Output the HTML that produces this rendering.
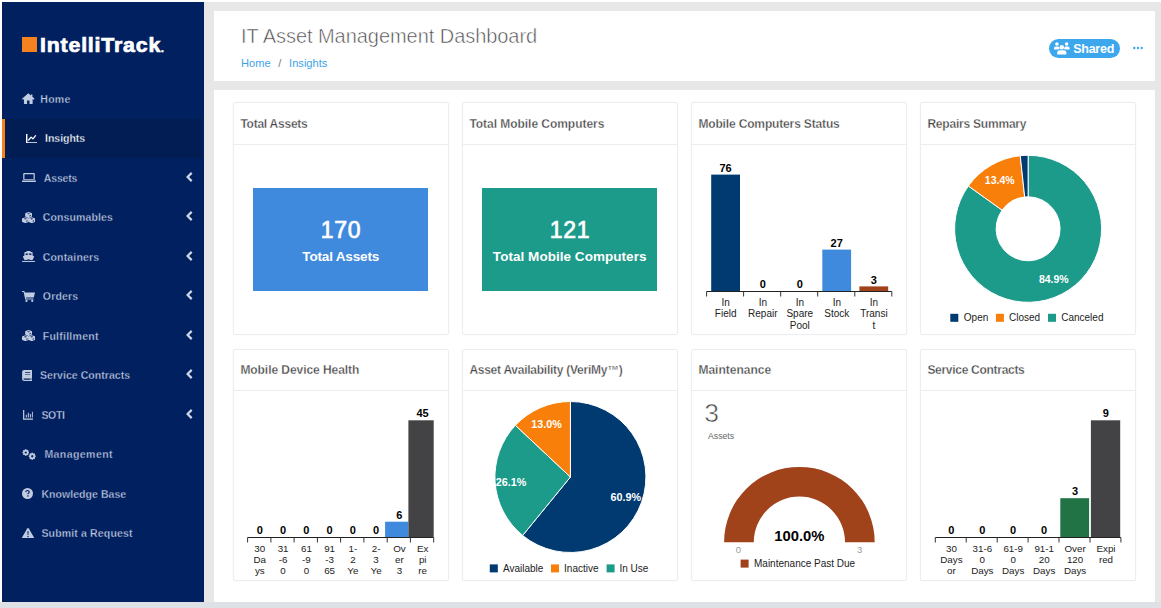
<!DOCTYPE html>
<html lang="en">
<head>
<meta charset="utf-8">
<title>IT Asset Management Dashboard</title>
<style>
*{box-sizing:border-box;margin:0;padding:0}
html,body{width:1161px;height:608px;overflow:hidden;background:#fff;font-family:"Liberation Sans",sans-serif;}
.abs{position:absolute}
#app{position:absolute;left:0;top:0;width:1161px;height:608px;background:#fff;overflow:hidden}
#main{position:absolute;left:2px;top:2px;width:1159px;height:600px;background:#e7e7e7}
#foot{position:absolute;left:0;top:602px;width:1161px;height:6px;background:#dee2e6}
#side{position:absolute;left:2px;top:2px;width:202px;height:600px;background:#00205f}
#logo-sq{position:absolute;left:20.4px;top:35.2px;width:14.8px;height:14.5px;background:#f5821f}
#logo-t{position:absolute;left:38.3px;top:29.5px;font-weight:bold;font-size:19.5px;line-height:26px;color:#fff;letter-spacing:.75px;white-space:nowrap;-webkit-text-stroke:.7px #fff;transform:scaleX(1.092);transform-origin:0 0}
#logo-t i{font-style:normal;font-size:9px;letter-spacing:0}
.mi{position:absolute;left:0;width:202px;height:39px;color:#c2cce1;font-size:10.5px;font-weight:bold;line-height:39px;white-space:nowrap}
.mi.on{background:#021d54;color:#fff;border-left:3px solid #f5821f;width:200px}
.mi svg{position:absolute;left:20px;top:13px;width:13px;height:13px;fill:currentColor}
.mi span{position:absolute;left:38px;top:0;-webkit-text-stroke:.3px #00205f}
.mi.on span{-webkit-text-stroke:.3px #021d54}
.mi b{position:absolute;left:181px;top:14px;width:6px;height:10px}
#hdr{position:absolute;left:214px;top:11px;width:941px;height:70px;background:#fff}
#hdr h1{position:absolute;left:27px;top:12.2px;font-size:20px;line-height:26px;font-weight:normal;color:#4a4a4a;-webkit-text-stroke:.55px #fff;letter-spacing:-.05px;white-space:nowrap}
#crumb{position:absolute;left:27px;top:45.2px;font-size:11.1px;line-height:14px;color:#777;white-space:nowrap}
#crumb span{display:inline-block;margin:0 7.8px 0 7.6px}
#crumb a{color:#3ea3e6;text-decoration:none}
#pill{position:absolute;left:835px;top:27.7px;width:71.2px;height:19.5px;border-radius:10px;background:#3da7ee;color:#fff;font-weight:bold;font-size:12.5px;line-height:19px;letter-spacing:-.25px}
#pill span{position:absolute;left:24.2px;top:1.2px}
#pill svg{position:absolute;left:5px;top:3.4px;width:15.6px;height:12.7px;fill:#fff}
#dots{position:absolute;left:918.8px;top:34.5px;width:10px;height:4px}
#card{position:absolute;left:214px;top:90px;width:941px;height:512px;background:#fff}
.pn{position:absolute;width:216px;height:232px;border:1px solid #ebeef1;border-radius:2px;background:#fff;box-shadow:0 0 2px rgba(0,0,0,.03)}
.pn h2{position:absolute;left:0;top:0;width:214px;height:41px;border-bottom:1px solid #ebeef1;font-size:12px;line-height:41px;padding-left:6.4px;color:#444;font-weight:bold;white-space:nowrap;-webkit-text-stroke:.3px #fff}
.pn svg.ch{position:absolute;left:-1px;top:-1px;width:216px;height:233px}
.box{position:absolute;left:19.2px;top:85px;width:175px;height:103px;color:#fff;text-align:center}
.box .n{position:absolute;left:0;width:100%;top:27.4px;font-size:23px;line-height:30px;-webkit-text-stroke:.7px #fff;letter-spacing:.8px;text-indent:.8px}
.box .l{position:absolute;left:0;width:100%;top:60px;font-size:13.5px;line-height:18px;font-weight:bold;white-space:nowrap}
.big3{position:absolute;left:12.3px;top:48.3px;font-size:26.5px;line-height:30px;color:#444;-webkit-text-stroke:.6px #fff}
.sm{position:absolute;left:16px;top:80.3px;font-size:8.7px;line-height:12px;color:#666}
svg text{font-family:"Liberation Sans",sans-serif}
</style>
</head>
<body>
<div id="app">
<div id="main"></div>
<div id="foot"></div>
<div id="side">
  <div id="logo-sq"></div>
  <div id="logo-t">IntelliTrack<i>.</i></div>
  <div class="mi" style="top:77.5px"><svg viewBox="0 0 26 22" style="left:20.3px;top:13.2px;width:12.6px;height:11.2px"><path d="M13 0 L0 11.3 L1.800 13.400 L4 11.600 V21 Q4 22 5 22 H10.500 V15 H15.500 V22 H21 Q22 22 22 21 V11.600 L24.200 13.400 L26 11.300 L21.500 7.400 V2.500 H18.300 V4.600 Z"/></svg><span style="left:38.3px;letter-spacing:0.28px">Home</span></div>
  <div class="mi on" style="top:117.0px"><svg viewBox="0 0 24 20" style="left:20.6px;top:14.8px;width:11.5px;height:9.6px"><path d="M0 0 H3 V17 H24 V20 H0 Z"/><path d="M5.5 12.5 L10.5 6.5 L14.5 10 L20 3.5" fill="none" stroke="currentColor" stroke-width="2.6" stroke-linecap="round" stroke-linejoin="round"/></svg><span style="left:40.0px;letter-spacing:-0.01px">Insights</span></div>
  <div class="mi" style="top:156.5px"><svg viewBox="0 0 28 19" style="left:20.3px;top:14px;width:14px;height:9.5px"><path d="M4.400 0 H23.600 Q25.600 0 25.600 2 V13.600 H2.400 V2 Q2.400 0 4.400 0 Z M4.900 2.500 V11.800 H23.100 V2.500 Z" fill-rule="evenodd"/><path d="M0 14.800 H28 V16 Q28 19 25 19 H3 Q0 19 0 16 Z"/></svg><span style="left:41.8px;letter-spacing:-0.17px">Assets</span><svg viewBox="0 0 7 10" style="left:183.800px;top:13.400px;width:7px;height:10px;fill:none"><path d="M5.700 0.900 L1.600 5 L5.700 9.100" stroke="#cfd6e4" stroke-width="2.200" fill="none"/></svg></div>
  <div class="mi" style="top:196.0px"><svg viewBox="0 0 132 112" style="left:20.1px;top:13.600px;width:13.200px;height:11.200px"><path transform="translate(32,0) scale(.133,.118)" fill-rule="evenodd" d="M256 3 L480 87 Q512 100 512 130 V355 Q512 385 486 398 L278 502 Q256 512 234 502 L26 398 Q0 385 0 355 V130 Q0 100 32 87 Z M256 96 L380 141 L256 190 L132 141 Z M316 392 V296 L424 252 V340 Z"/><path transform="translate(0,52) scale(.133,.118)" fill-rule="evenodd" d="M256 3 L480 87 Q512 100 512 130 V355 Q512 385 486 398 L278 502 Q256 512 234 502 L26 398 Q0 385 0 355 V130 Q0 100 32 87 Z M256 96 L380 141 L256 190 L132 141 Z M316 392 V296 L424 252 V340 Z"/><path transform="translate(64,52) scale(.133,.118)" fill-rule="evenodd" d="M256 3 L480 87 Q512 100 512 130 V355 Q512 385 486 398 L278 502 Q256 512 234 502 L26 398 Q0 385 0 355 V130 Q0 100 32 87 Z M256 96 L380 141 L256 190 L132 141 Z M316 392 V296 L424 252 V340 Z"/></svg><span style="left:40.8px;letter-spacing:0.12px">Consumables</span><svg viewBox="0 0 7 10" style="left:183.800px;top:13.400px;width:7px;height:10px;fill:none"><path d="M5.700 0.900 L1.600 5 L5.700 9.100" stroke="#cfd6e4" stroke-width="2.200" fill="none"/></svg></div>
  <div class="mi" style="top:235.5px"><svg viewBox="0 0 26 22" style="left:20px;top:13px;width:13px;height:11px"><path d="M9 0 H17 V2.200 H20 Q21.200 2.200 21.200 3.400 V9.200 L23.800 10.300 Q24.500 10.700 24.200 11.500 L21.500 17.500 Q17 18.600 13 16.600 Q9 18.600 4.500 17.500 L1.800 11.500 Q1.500 10.700 2.200 10.300 L4.800 9.200 V3.400 Q4.800 2.200 6 2.200 H9 Z M7.300 5.200 V8.600 L12.200 6.900 V5.200 Z M13.800 5.200 V6.900 L18.700 8.600 V5.200 Z" fill-rule="evenodd"/><path d="M0 19.300 Q3.200 20.600 6.500 19.300 Q9.700 20.800 13 19.300 Q16.300 20.800 19.500 19.300 Q22.800 20.600 26 19.300 V21.600 Q22.800 22.600 19.500 21.500 Q16.300 22.800 13 21.500 Q9.700 22.800 6.500 21.500 Q3.200 22.600 0 21.600 Z"/></svg><span style="left:40.8px;letter-spacing:0.16px">Containers</span><svg viewBox="0 0 7 10" style="left:183.800px;top:13.400px;width:7px;height:10px;fill:none"><path d="M5.700 0.900 L1.600 5 L5.700 9.100" stroke="#cfd6e4" stroke-width="2.200" fill="none"/></svg></div>
  <div class="mi" style="top:275.0px"><svg viewBox="0 0 26 22" style="left:20px;top:14px;width:13px;height:11px"><path d="M0 0 H4.800 L5.500 3 H26 L23.500 13 H8 L8.500 15 H23 V17.200 H6.500 L3.200 2.200 H0 Z"/><circle cx="9" cy="19.800" r="2.200"/><circle cx="20.500" cy="19.800" r="2.200"/></svg><span style="left:40.8px;letter-spacing:0.18px">Orders</span><svg viewBox="0 0 7 10" style="left:183.800px;top:13.400px;width:7px;height:10px;fill:none"><path d="M5.700 0.900 L1.600 5 L5.700 9.100" stroke="#cfd6e4" stroke-width="2.200" fill="none"/></svg></div>
  <div class="mi" style="top:314.5px"><svg viewBox="0 0 132 112" style="left:20.1px;top:13.600px;width:13.200px;height:11.200px"><path transform="translate(32,0) scale(.133,.118)" fill-rule="evenodd" d="M256 3 L480 87 Q512 100 512 130 V355 Q512 385 486 398 L278 502 Q256 512 234 502 L26 398 Q0 385 0 355 V130 Q0 100 32 87 Z M256 96 L380 141 L256 190 L132 141 Z M316 392 V296 L424 252 V340 Z"/><path transform="translate(0,52) scale(.133,.118)" fill-rule="evenodd" d="M256 3 L480 87 Q512 100 512 130 V355 Q512 385 486 398 L278 502 Q256 512 234 502 L26 398 Q0 385 0 355 V130 Q0 100 32 87 Z M256 96 L380 141 L256 190 L132 141 Z M316 392 V296 L424 252 V340 Z"/><path transform="translate(64,52) scale(.133,.118)" fill-rule="evenodd" d="M256 3 L480 87 Q512 100 512 130 V355 Q512 385 486 398 L278 502 Q256 512 234 502 L26 398 Q0 385 0 355 V130 Q0 100 32 87 Z M256 96 L380 141 L256 190 L132 141 Z M316 392 V296 L424 252 V340 Z"/></svg><span style="left:40.8px;letter-spacing:0.25px">Fulfillment</span><svg viewBox="0 0 7 10" style="left:183.800px;top:13.400px;width:7px;height:10px;fill:none"><path d="M5.700 0.900 L1.600 5 L5.700 9.100" stroke="#cfd6e4" stroke-width="2.200" fill="none"/></svg></div>
  <div class="mi" style="top:354.0px"><svg viewBox="0 0 20 22" style="left:20.2px;top:14px;width:10.200px;height:11px"><path d="M4 0 H20 V16.300 H18.900 V19.600 H20 V22 H4 Q0 22 0 18 V4 Q0 0 4 0 Z M6 4.600 V6 H16.200 V4.600 Z M6 8.300 V9.700 H16.200 V8.300 Z M4 17 Q2.700 17 2.700 18.200 Q2.700 19.400 4 19.400 H16.800 V17 Z" fill-rule="evenodd"/></svg><span style="left:38.0px;letter-spacing:0.05px">Service Contracts</span><svg viewBox="0 0 7 10" style="left:183.800px;top:13.400px;width:7px;height:10px;fill:none"><path d="M5.700 0.900 L1.600 5 L5.700 9.100" stroke="#cfd6e4" stroke-width="2.200" fill="none"/></svg></div>
  <div class="mi" style="top:393.5px"><svg viewBox="0 0 22 20" style="left:20.5px;top:14.400px;width:10.900px;height:9.800px"><path d="M0 0 H2.500 V17.500 H22 V20 H0 Z"/><path d="M5.500 9.500 H8 V15.500 H5.500 Z M9.700 5.500 H12.200 V15.500 H9.700 Z M13.900 8 H16.400 V15.500 H13.900 Z M18.100 3.500 H20.600 V15.500 H18.100 Z" opacity=".85"/></svg><span style="left:39.4px;letter-spacing:-0.30px">SOTI</span><svg viewBox="0 0 7 10" style="left:183.800px;top:13.400px;width:7px;height:10px;fill:none"><path d="M5.700 0.900 L1.600 5 L5.700 9.100" stroke="#cfd6e4" stroke-width="2.200" fill="none"/></svg></div>
  <div class="mi" style="top:433.0px"><svg viewBox="0 0 28 22" style="left:20.3px;top:13.8px;width:14px;height:11px"><g transform="translate(7.500,7)"><path d="M-1.500 -6.500 H1.500 L2 -4.600 L3.700 -5.600 L5.600 -3.700 L4.600 -2 L6.500 -1.500 V1.500 L4.600 2 L5.600 3.700 L3.700 5.600 L2 4.600 L1.500 6.500 H-1.500 L-2 4.600 L-3.700 5.600 L-5.600 3.700 L-4.600 2 L-6.500 1.500 V-1.500 L-4.600 -2 L-5.600 -3.700 L-3.700 -5.600 L-2 -4.600 Z M0 -2.200 A2.200 2.200 0 1 0 0.010 -2.200 Z" fill-rule="evenodd"/></g><g transform="translate(20.500,14.500) scale(1.050)"><path d="M-1.500 -6.500 H1.500 L2 -4.600 L3.700 -5.600 L5.600 -3.700 L4.600 -2 L6.500 -1.500 V1.500 L4.600 2 L5.600 3.700 L3.700 5.600 L2 4.600 L1.500 6.500 H-1.500 L-2 4.600 L-3.700 5.600 L-5.600 3.700 L-4.600 2 L-6.500 1.500 V-1.500 L-4.600 -2 L-5.600 -3.700 L-3.700 -5.600 L-2 -4.600 Z M0 -2.200 A2.200 2.200 0 1 0 0.010 -2.200 Z" fill-rule="evenodd"/></g></svg><span style="left:42.4px;letter-spacing:0.44px">Management</span></div>
  <div class="mi" style="top:472.5px"><svg viewBox="0 0 22 22" style="left:20.2px;top:13.300px;width:11px;height:11px"><circle cx="11" cy="11" r="11"/><path d="M7.600 8.200 Q7.800 5 11.200 5 Q14.500 5 14.500 7.800 Q14.500 9.600 12.800 10.500 Q12 11 12 12.300" fill="none" stroke="#00205f" stroke-width="2.300"/><circle cx="11.900" cy="16" r="1.500" fill="#00205f"/></svg><span style="left:39.4px;letter-spacing:0.06px">Knowledge Base</span></div>
  <div class="mi" style="top:511.9px"><svg viewBox="0 0 24 21" style="left:20px;top:14px;width:12px;height:10.500px"><path d="M12 0 Q13 0 13.600 1 L23.700 18.500 Q24.500 21 22 21 H2 Q-0.500 21 0.300 18.500 L10.400 1 Q11 0 12 0 Z"/><path d="M10.800 6.500 H13.200 L12.800 14 H11.200 Z" fill="#00205f"/><circle cx="12" cy="17" r="1.500" fill="#00205f"/></svg><span style="left:39.4px;letter-spacing:0.16px">Submit a Request</span></div>
</div>
<div id="hdr">
  <h1>IT Asset Management Dashboard</h1>
  <div id="crumb"><a>Home</a><span>/</span><a>Insights</a></div>
  <div id="pill"><svg viewBox="0 0 16 13"><circle cx="8" cy="5.300" r="2.300"/><path d="M3.700 12.900 Q3.300 12.900 3.300 12.300 V11 Q3.300 8.400 6 8.400 H10 Q12.700 8.400 12.700 11 V12.300 Q12.700 12.900 12.300 12.900 Z"/><circle cx="3" cy="2.100" r="1.800"/><path d="M0 7.700 V6.500 Q0 4.700 1.800 4.700 H4.200 Q4.900 4.700 5.300 5.100 Q5.200 6.300 5.900 7.200 Q4.800 7.300 4.200 7.700 Z"/><circle cx="13" cy="2.100" r="1.800"/><path d="M16 7.700 V6.500 Q16 4.700 14.200 4.700 H11.800 Q11.100 4.700 10.700 5.100 Q10.800 6.300 10.100 7.200 Q11.200 7.300 11.800 7.700 Z"/></svg><span>Shared</span></div>
  <svg id="dots" viewBox="0 0 10 4"><circle cx="1.3" cy="2" r="1.2" fill="#3da7ee"/><circle cx="5" cy="2" r="1.2" fill="#3da7ee"/><circle cx="8.7" cy="2" r="1.2" fill="#3da7ee"/></svg>
</div>
<div id="card">
  <div class="pn" style="left:19px;top:12px;height:233px"><h2 style="letter-spacing:-0.24px;height:42px;line-height:43px">Total Assets</h2><div class="box" style="background:#3f8adc"><div class="n">170</div><div class="l" style="letter-spacing:-0.17px">Total Assets</div></div></div>
  <div class="pn" style="left:248px;top:12px;height:233px"><h2 style="letter-spacing:-0.04px;height:42px;line-height:43px">Total Mobile Computers</h2><div class="box" style="background:#1c9a8a"><div class="n">121</div><div class="l" style="letter-spacing:0.04px">Total Mobile Computers</div></div></div>
  <div class="pn" style="left:477px;top:12px;height:233px"><h2 style="letter-spacing:-0.15px;height:42px;line-height:43px">Mobile Computers Status</h2><svg class="ch" viewBox="0 0 216 233"><rect x="20.2" y="72.6" width="28.8" height="116.4" fill="#003a70"/>
<rect x="131.3" y="147.6" width="28.8" height="41.4" fill="#3f8adc"/>
<rect x="168.4" y="184.4" width="28.8" height="4.6" fill="#a0421a"/>
<path d="M15.6 189.5 H200.8" stroke="#222" stroke-width="1" fill="none"/>
<path d="M15.6 189.5 v5 M52.6 189.5 v5 M89.7 189.5 v5 M126.7 189.5 v5 M163.8 189.5 v5 M200.8 189.5 v5 " stroke="#333" stroke-width="1" fill="none"/>
<text x="34.6" y="69.7" font-size="11" text-anchor="middle" fill="#000" font-weight="bold">76</text>
<text x="34.7" y="203.8" font-size="10" text-anchor="middle" fill="#222">In</text>
<text x="34.7" y="215.3" font-size="10" text-anchor="middle" fill="#222">Field</text>
<text x="71.7" y="186.1" font-size="11" text-anchor="middle" fill="#000" font-weight="bold">0</text>
<text x="71.8" y="203.8" font-size="10" text-anchor="middle" fill="#222">In</text>
<text x="71.8" y="215.3" font-size="10" text-anchor="middle" fill="#222">Repair</text>
<text x="108.7" y="186.1" font-size="11" text-anchor="middle" fill="#000" font-weight="bold">0</text>
<text x="108.8" y="203.8" font-size="10" text-anchor="middle" fill="#222">In</text>
<text x="108.8" y="215.3" font-size="10" text-anchor="middle" fill="#222">Spare</text>
<text x="108.8" y="226.8" font-size="10" text-anchor="middle" fill="#222">Pool</text>
<text x="145.7" y="144.7" font-size="11" text-anchor="middle" fill="#000" font-weight="bold">27</text>
<text x="145.8" y="203.8" font-size="10" text-anchor="middle" fill="#222">In</text>
<text x="145.8" y="215.3" font-size="10" text-anchor="middle" fill="#222">Stock</text>
<text x="182.8" y="181.5" font-size="11" text-anchor="middle" fill="#000" font-weight="bold">3</text>
<text x="182.9" y="203.8" font-size="10" text-anchor="middle" fill="#222">In</text>
<text x="182.9" y="215.3" font-size="10" text-anchor="middle" fill="#222">Transi</text>
<text x="182.9" y="226.8" font-size="10" text-anchor="middle" fill="#222">t</text></svg></div>
  <div class="pn" style="left:706px;top:12px;height:233px"><h2 style="letter-spacing:-0.21px;height:42px;line-height:43px">Repairs Summary</h2><svg class="ch" viewBox="0 0 216 233"><path d="M108.10 53.30 A73.5 73.5 0 1 1 48.37 83.97 L82.09 108.15 A32 32 0 1 0 108.10 94.80 Z" fill="#1c9a8a" stroke="#fff" stroke-width="1"/>
<path d="M48.37 83.97 A73.5 73.5 0 0 1 100.26 53.72 L104.69 94.98 A32 32 0 0 0 82.09 108.15 Z" fill="#f77f0a" stroke="#fff" stroke-width="1"/>
<path d="M100.26 53.72 A73.5 73.5 0 0 1 108.10 53.30 L108.10 94.80 A32 32 0 0 0 104.69 94.98 Z" fill="#003a70" stroke="#fff" stroke-width="1"/>
<text x="79.7" y="82.0" font-size="10.5" text-anchor="middle" fill="#fff" font-weight="bold">13.4%</text>
<text x="133.8" y="181.0" font-size="10.5" text-anchor="middle" fill="#fff" font-weight="bold">84.9%</text>
<rect x="30.3" y="211.8" width="8" height="8" fill="#003a70"/>
<text x="43.8" y="219.3" font-size="10" text-anchor="start" fill="#222">Open</text>
<rect x="75.9" y="211.8" width="8" height="8" fill="#f77f0a"/>
<text x="89.0" y="219.3" font-size="10" text-anchor="start" fill="#222">Closed</text>
<rect x="128.0" y="211.8" width="8" height="8" fill="#1c9a8a"/>
<text x="141.2" y="219.3" font-size="10" text-anchor="start" fill="#222">Canceled</text></svg></div>
  <div class="pn" style="left:19px;top:259px;height:232px"><h2 style="letter-spacing:-0.06px;height:41px;line-height:40px">Mobile Device Health</h2><svg class="ch" viewBox="0 0 216 233"><rect x="152.1" y="172.7" width="23.3" height="15.3" fill="#3f8adc"/>
<rect x="175.4" y="71.3" width="25.3" height="116.7" fill="#434345"/>
<path d="M14.6 188.5 H200.7" stroke="#222" stroke-width="1" fill="none"/>
<path d="M14.6 188.5 v5 M37.9 188.5 v5 M61.1 188.5 v5 M84.4 188.5 v5 M107.6 188.5 v5 M130.9 188.5 v5 M154.2 188.5 v5 M177.4 188.5 v5 M200.7 188.5 v5 " stroke="#333" stroke-width="1" fill="none"/>
<text x="26.7" y="185.1" font-size="11" text-anchor="middle" fill="#000" font-weight="bold">0</text>
<text x="26.8" y="203.3" font-size="9.8" text-anchor="middle" fill="#222">30</text>
<text x="26.8" y="214.3" font-size="9.8" text-anchor="middle" fill="#222">Da</text>
<text x="26.8" y="225.3" font-size="9.8" text-anchor="middle" fill="#222">ys</text>
<text x="50.0" y="185.1" font-size="11" text-anchor="middle" fill="#000" font-weight="bold">0</text>
<text x="50.1" y="203.3" font-size="9.8" text-anchor="middle" fill="#222">31</text>
<text x="50.1" y="214.3" font-size="9.8" text-anchor="middle" fill="#222">-6</text>
<text x="50.1" y="225.3" font-size="9.8" text-anchor="middle" fill="#222">0</text>
<text x="73.3" y="185.1" font-size="11" text-anchor="middle" fill="#000" font-weight="bold">0</text>
<text x="73.4" y="203.3" font-size="9.8" text-anchor="middle" fill="#222">61</text>
<text x="73.4" y="214.3" font-size="9.8" text-anchor="middle" fill="#222">-9</text>
<text x="73.4" y="225.3" font-size="9.8" text-anchor="middle" fill="#222">0</text>
<text x="96.5" y="185.1" font-size="11" text-anchor="middle" fill="#000" font-weight="bold">0</text>
<text x="96.6" y="203.3" font-size="9.8" text-anchor="middle" fill="#222">91</text>
<text x="96.6" y="214.3" font-size="9.8" text-anchor="middle" fill="#222">-3</text>
<text x="96.6" y="225.3" font-size="9.8" text-anchor="middle" fill="#222">65</text>
<text x="119.8" y="185.1" font-size="11" text-anchor="middle" fill="#000" font-weight="bold">0</text>
<text x="119.9" y="203.3" font-size="9.8" text-anchor="middle" fill="#222">1-</text>
<text x="119.9" y="214.3" font-size="9.8" text-anchor="middle" fill="#222">2</text>
<text x="119.9" y="225.3" font-size="9.8" text-anchor="middle" fill="#222">Ye</text>
<text x="143.0" y="185.1" font-size="11" text-anchor="middle" fill="#000" font-weight="bold">0</text>
<text x="143.1" y="203.3" font-size="9.8" text-anchor="middle" fill="#222">2-</text>
<text x="143.1" y="214.3" font-size="9.8" text-anchor="middle" fill="#222">3</text>
<text x="143.1" y="225.3" font-size="9.8" text-anchor="middle" fill="#222">Ye</text>
<text x="166.3" y="169.8" font-size="11" text-anchor="middle" fill="#000" font-weight="bold">6</text>
<text x="166.4" y="203.3" font-size="9.8" text-anchor="middle" fill="#222">Ov</text>
<text x="166.4" y="214.3" font-size="9.8" text-anchor="middle" fill="#222">er</text>
<text x="166.4" y="225.3" font-size="9.8" text-anchor="middle" fill="#222">3</text>
<text x="189.6" y="68.4" font-size="11" text-anchor="middle" fill="#000" font-weight="bold">45</text>
<text x="189.7" y="203.3" font-size="9.8" text-anchor="middle" fill="#222">Ex</text>
<text x="189.7" y="214.3" font-size="9.8" text-anchor="middle" fill="#222">pi</text>
<text x="189.7" y="225.3" font-size="9.8" text-anchor="middle" fill="#222">re</text></svg></div>
  <div class="pn" style="left:248px;top:259px;height:232px"><h2 style="letter-spacing:-0.26px;height:41px;line-height:40px">Asset Availability (VeriMy™)</h2><svg class="ch" viewBox="0 0 216 233"><path d="M108.40 128.00 L108.40 52.50 A75.5 75.5 0 1 1 60.64 186.47 Z" fill="#003a70" stroke="#fff" stroke-width="1"/>
<path d="M108.40 128.00 L60.64 186.47 A75.5 75.5 0 0 1 53.36 76.32 Z" fill="#1c9a8a" stroke="#fff" stroke-width="1"/>
<path d="M108.40 128.00 L53.36 76.32 A75.5 75.5 0 0 1 108.40 52.50 Z" fill="#f77f0a" stroke="#fff" stroke-width="1"/>
<text x="163.7" y="152.0" font-size="10.8" text-anchor="middle" fill="#fff" font-weight="bold">60.9%</text>
<text x="49.0" y="137.0" font-size="10.8" text-anchor="middle" fill="#fff" font-weight="bold">26.1%</text>
<text x="84.6" y="78.6" font-size="10.8" text-anchor="middle" fill="#fff" font-weight="bold">13.0%</text>
<rect x="27.8" y="215.4" width="8" height="8" fill="#003a70"/>
<text x="40.9" y="222.9" font-size="10" text-anchor="start" fill="#222">Available</text>
<rect x="89.0" y="215.4" width="8" height="8" fill="#f77f0a"/>
<text x="102.1" y="222.9" font-size="10" text-anchor="start" fill="#222">Inactive</text>
<rect x="144.6" y="215.4" width="8" height="8" fill="#1c9a8a"/>
<text x="157.4" y="222.9" font-size="10" text-anchor="start" fill="#222">In Use</text></svg></div>
  <div class="pn" style="left:477px;top:259px;height:232px"><h2 style="letter-spacing:0.00px;height:41px;line-height:40px">Maintenance</h2><svg class="ch" viewBox="0 0 216 233"><path d="M33.1 193.2 A75.3 75.3 0 0 1 183.7 193.2 H154.0 A45.6 45.6 0 0 0 62.8 193.2 Z" fill="#a0421a"/>
<text x="108.4" y="192.0" font-size="14.8" text-anchor="middle" fill="#000" font-weight="bold">100.0%</text>
<text x="47.4" y="204.4" font-size="9.5" text-anchor="middle" fill="#999">0</text>
<text x="168.7" y="204.4" font-size="9.5" text-anchor="middle" fill="#999">3</text>
<rect x="49.6" y="210.6" width="8" height="8" fill="#a0421a"/>
<text x="63.0" y="218.1" font-size="10" text-anchor="start" fill="#222">Maintenance Past Due</text></svg><div class="big3">3</div><div class="sm">Assets</div></div>
  <div class="pn" style="left:706px;top:259px;height:232px"><h2 style="letter-spacing:-0.29px;height:41px;line-height:40px">Service Contracts</h2><svg class="ch" viewBox="0 0 216 233"><rect x="140.3" y="149.2" width="28.8" height="38.8" fill="#217346"/>
<rect x="170.9" y="71.3" width="29.3" height="116.7" fill="#434345"/>
<path d="M15.3 188.5 H200.9" stroke="#222" stroke-width="1" fill="none"/>
<path d="M15.3 188.5 v5 M46.2 188.5 v5 M77.2 188.5 v5 M108.1 188.5 v5 M139.0 188.5 v5 M170.0 188.5 v5 M200.9 188.5 v5 " stroke="#333" stroke-width="1" fill="none"/>
<text x="31.3" y="185.1" font-size="11" text-anchor="middle" fill="#000" font-weight="bold">0</text>
<text x="31.4" y="203.3" font-size="9.8" text-anchor="middle" fill="#222">30</text>
<text x="31.4" y="214.3" font-size="9.8" text-anchor="middle" fill="#222">Days</text>
<text x="31.4" y="225.3" font-size="9.8" text-anchor="middle" fill="#222">or</text>
<text x="62.2" y="185.1" font-size="11" text-anchor="middle" fill="#000" font-weight="bold">0</text>
<text x="62.3" y="203.3" font-size="9.8" text-anchor="middle" fill="#222">31-6</text>
<text x="62.3" y="214.3" font-size="9.8" text-anchor="middle" fill="#222">0</text>
<text x="62.3" y="225.3" font-size="9.8" text-anchor="middle" fill="#222">Days</text>
<text x="93.1" y="185.1" font-size="11" text-anchor="middle" fill="#000" font-weight="bold">0</text>
<text x="93.2" y="203.3" font-size="9.8" text-anchor="middle" fill="#222">61-9</text>
<text x="93.2" y="214.3" font-size="9.8" text-anchor="middle" fill="#222">0</text>
<text x="93.2" y="225.3" font-size="9.8" text-anchor="middle" fill="#222">Days</text>
<text x="124.1" y="185.1" font-size="11" text-anchor="middle" fill="#000" font-weight="bold">0</text>
<text x="124.2" y="203.3" font-size="9.8" text-anchor="middle" fill="#222">91-1</text>
<text x="124.2" y="214.3" font-size="9.8" text-anchor="middle" fill="#222">20</text>
<text x="124.2" y="225.3" font-size="9.8" text-anchor="middle" fill="#222">Days</text>
<text x="155.0" y="146.3" font-size="11" text-anchor="middle" fill="#000" font-weight="bold">3</text>
<text x="155.1" y="203.3" font-size="9.8" text-anchor="middle" fill="#222">Over</text>
<text x="155.1" y="214.3" font-size="9.8" text-anchor="middle" fill="#222">120</text>
<text x="155.1" y="225.3" font-size="9.8" text-anchor="middle" fill="#222">Days</text>
<text x="185.9" y="68.4" font-size="11" text-anchor="middle" fill="#000" font-weight="bold">9</text>
<text x="186.0" y="203.3" font-size="9.8" text-anchor="middle" fill="#222">Expi</text>
<text x="186.0" y="214.3" font-size="9.8" text-anchor="middle" fill="#222">red</text></svg></div>
</div>
</div>
</body>
</html>
